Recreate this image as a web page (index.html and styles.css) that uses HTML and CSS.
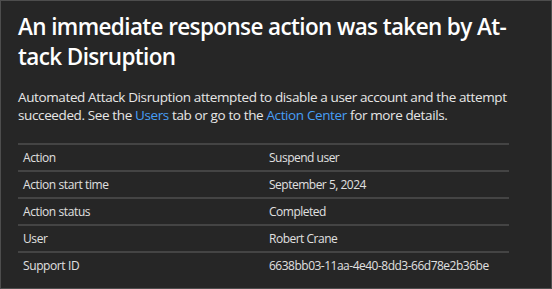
FILE: index.html
```html
<!DOCTYPE html>
<html lang="en">
<head>
  <meta charset="UTF-8" />
  <title>Attack Disruption</title>
  <link rel="stylesheet" href="styles.css">
</head>
<body>
  <div class="panel">
    <h1>An immediate response action was taken by At-<br>tack Disruption</h1>
    <p class="intro">
      Automated Attack Disruption attempted to disable a user account and the attempt<br>
      succeeded. See the <a href="#">Users</a> tab or go to the <a href="#">Action Center</a> for more details.
    </p>

    <!-- details table -->
    <table class="details">
      <tr><td>Action</td><td>Suspend user</td></tr>
      <tr><td>Action start time</td><td>September 5, 2024</td></tr>
      <tr><td>Action status</td><td>Completed</td></tr>
      <tr><td>User</td><td>Robert Crane</td></tr>
      <tr><td>Support ID</td><td>6638bb03-11aa-4e40-8dd3-66d78e2b36be</td></tr>
    </table>
  </div>
</body>
</html>
```

FILE: styles.css
```css
/* page */
body {
  margin: 0;
  padding: 0;
  background-color: #1b1b1b;
  font-family: "Open Sans", "Noto Sans", sans-serif;
}

.panel {
  box-sizing: border-box;
  width: 552px;
  height: 289px;
  padding: 11px 42px 0 17px;
  background-color: #262626;
  border: 1px solid #4d4d4d;
  overflow: hidden;
}

h1 {
  margin: 0;
  font-size: 22.5px;
  font-weight: 600;
  line-height: 30px;
  letter-spacing: -0.62px;
  white-space: nowrap;
  color: #ffffff;
}

.intro {
  margin: 16px 0 19px;
  font-size: 13.5px;
  line-height: 18px;
  letter-spacing: -0.38px;
  white-space: nowrap;
  color: #e6e6e6;
}
.intro a {
  color: #479ef5;
  text-decoration: none;
}

/* details table */
.details {
  width: 100%;
  border-collapse: collapse;
  border-top: 2px solid #444444;
  font-size: 12px;
  letter-spacing: -0.4px;
  color: #e0e0e0;
}
.details td {
  height: 25px;
  padding: 0 5px;
  border-bottom: 2px solid #444444;
  white-space: nowrap;
}
.details td:first-child {
  width: 236px;
}
.details td + td {
  letter-spacing: -0.5px;
}
.details tr:last-child td {
  border-bottom: none;
}
```
